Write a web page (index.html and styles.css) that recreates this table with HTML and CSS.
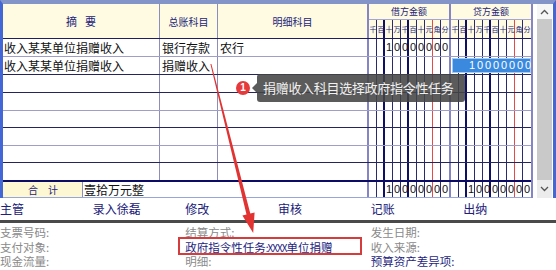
FILE: index.html
```html
<!DOCTYPE html>
<html lang="zh-CN">
<head>
<meta charset="utf-8">
<title>记账凭证</title>
<link rel="stylesheet" href="styles.css">
</head>
<body>
<div class="page">
  <div class="voucher">
    <div class="grid">
      <div class="row head">
        <div class="c c1 hd"><span>摘</span><span class="gap">要</span></div>
        <div class="c c2 hd">总账科目</div>
        <div class="c c3 hd">明细科目</div>
        <div class="amt ahead">
          <div class="atitle">借方金额</div>
          <div class="digits lbl lines"><span>千</span><span>百</span><span>十</span><span>万</span><span>千</span><span>百</span><span>十</span><span>元</span><span>角</span><span>分</span></div>
        </div>
        <div class="amt ahead">
          <div class="atitle">贷方金额</div>
          <div class="digits lbl lines"><span>千</span><span>百</span><span>十</span><span>万</span><span>千</span><span>百</span><span>十</span><span>元</span><span>角</span><span>分</span></div>
        </div>
      </div>
      <div class="row r18 lt">
        <div class="c c1">收入某某单位捐赠收入</div>
        <div class="c c2">银行存款</div>
        <div class="c c3">农行</div>
        <div class="amt lines"><div class="digits num"><span>1</span><span>0</span><span>0</span><span>0</span><span>0</span><span>0</span><span>0</span><span>0</span></div></div>
        <div class="amt lines"></div>
      </div>
      <div class="row r18 dk">
        <div class="c c1">收入某某单位捐赠收入</div>
        <div class="c c2">捐赠收入</div>
        <div class="c c3"></div>
        <div class="amt lines"></div>
        <div class="amt lines"><div class="digits num sel"><span>1</span><span>0</span><span>0</span><span>0</span><span>0</span><span>0</span><span>0</span><span>0</span></div></div>
      </div>
      <div class="row r18 dk"><div class="c c1"></div><div class="c c2"></div><div class="c c3"></div><div class="amt lines"></div><div class="amt lines"></div></div>
      <div class="row r18 lt"><div class="c c1"></div><div class="c c2"></div><div class="c c3"></div><div class="amt lines"></div><div class="amt lines"></div></div>
      <div class="row r17 dk"><div class="c c1"></div><div class="c c2"></div><div class="c c3"></div><div class="amt lines"></div><div class="amt lines"></div></div>
      <div class="row r18 lt"><div class="c c1"></div><div class="c c2"></div><div class="c c3"></div><div class="amt lines"></div><div class="amt lines"></div></div>
      <div class="row r17 dk"><div class="c c1"></div><div class="c c2"></div><div class="c c3"></div><div class="amt lines"></div><div class="amt lines"></div></div>
      <div class="row r17 last"><div class="c c1"></div><div class="c c2"></div><div class="c c3"></div><div class="amt lines"></div><div class="amt lines"></div></div>
      <div class="row total">
        <div class="c tlabel"><span>合</span><span class="gap2">计</span></div>
        <div class="c tsum">壹拾万元整</div>
        <div class="amt lines"><div class="digits num"><span>1</span><span>0</span><span>0</span><span>0</span><span>0</span><span>0</span><span>0</span><span>0</span></div></div>
        <div class="amt lines"><div class="digits num"><span>1</span><span>0</span><span>0</span><span>0</span><span>0</span><span>0</span><span>0</span><span>0</span></div></div>
      </div>
    </div>
    <div class="scroll">
      <div class="sb-up"><svg width="9" height="6" viewBox="0 0 9 6"><polyline points="1,5 4.5,1.5 8,5" fill="none" stroke="#555" stroke-width="1.3"/></svg></div>
      <div class="sb-track"></div>
      <div class="sb-down"><svg width="9" height="6" viewBox="0 0 9 6"><polyline points="1,1 4.5,4.5 8,1" fill="none" stroke="#555" stroke-width="1.3"/></svg></div>
    </div>
  </div>

  <div class="signs">
    <div>主管</div><div>录入徐磊</div><div>修改</div><div>审核</div><div>记账</div><div>出纳</div>
  </div>
  <div class="bar"></div>
  <div class="info">
    <div class="col">
      <div>支票号码:</div>
      <div>支付对象:</div>
      <div>现金流量:</div>
    </div>
    <div class="col">
      <div>结算方式:</div>
      <div class="navy">政府指令性任务<span class="xx">:XXXX</span>单位捐赠</div>
      <div>明细:</div>
    </div>
    <div class="col">
      <div>发生日期:</div>
      <div>收入来源:</div>
      <div class="navy">预算资产差异项:</div>
    </div>
    <div class="redbox"></div>
  </div>

  <svg class="arrow" width="556" height="270" viewBox="0 0 556 270">
    <polygon points="210.4,64 211.4,64 250.3,213.5 254.6,212.4 253.2,233 242.4,215.6 246.5,214.5" fill="#e23333"/>
  </svg>
  <div class="badge">1</div>
  <div class="tip">捐赠收入科目选择政府指令性任务</div>
</div>
</body>
</html>
```

FILE: styles.css
```css
* { box-sizing: border-box; }
html, body { margin: 0; padding: 0; background: #fff; }
body {
  font-family: "Noto Sans CJK SC", "Liberation Sans", sans-serif;
  font-size: 12px;
  color: #111;
}
.page {
  position: relative;
  width: 556px;
  height: 270px;
  overflow: hidden;
}

/* ---- voucher box ---- */
.voucher {
  display: flex;
  width: 556px;
  border-top: 4px solid #8394c8;
  border-left: 3px solid #4467d6;
  border-right: 3px solid #4467d6;
}
.grid { width: 528px; }

.row {
  display: grid;
  grid-template-columns: 157px 58px 149px 82px 82px;
  border-bottom: 1px solid #9e9ecb;
}
.row.dk { border-bottom-color: #25255e; }
.row.lt { border-bottom-color: #9e9ecb; }
.row.r18 { height: 18px; }
.row.r17 { height: 17px; }
.row.last { border-bottom: none; }

.c {
  white-space: nowrap;
  overflow: hidden;
  line-height: 17px;
  padding-left: 1px;
}
.c1 { border-right: 1px solid #8d8dbc; }
.c2 { border-right: 1px solid #8d8dbc; padding-left: 2px; }
.c3 { padding-left: 2px; }

.amt { border-left: 2px solid #8585c6; }

/* header */
.head {
  height: 35px;
  background: #fefbe2;
  border-bottom: 1px solid #1f1f60;
}
.hd {
  display: flex;
  align-items: center;
  justify-content: center;
  color: #23237a;
  font-size: 10px;
  padding-left: 0;
}
.c1.hd { font-size: 11px; }
.gap { margin-left: 8px; }
.ahead { display: flex; flex-direction: column; }
.atitle {
  height: 16px;
  border-bottom: 1px solid #a6a6d2;
  text-align: center;
  font-size: 9px;
  line-height: 15px;
  color: #23237a;
}

/* digit columns */
.lines {
  background-image:
    linear-gradient(to right, transparent 63px, #e34b4b 63px, #e34b4b 64px, transparent 64px),
    linear-gradient(to right, transparent 14px, #0f0f66 14px, #0f0f66 16px, transparent 16px, transparent 38px, #0f0f66 38px, #0f0f66 40px, transparent 40px),
    repeating-linear-gradient(to right, transparent 0, transparent 7px, #2a2a70 7px, #2a2a70 8px);
  background-size: 79px 100%;
  background-repeat: no-repeat;
}
.digits {
  display: grid;
  grid-template-columns: repeat(10, 8px);
  text-align: center;
}
.digits.lbl {
  height: 18px;
  font-size: 7px;
  line-height: 18px;
  color: #23237a;
}
.digits.num {
  font-family: "Liberation Sans", sans-serif;
  font-size: 11px;
  line-height: 17px;
  color: #111;
}
.digits.num span:first-child { grid-column-start: 3; }
.digits.sel {
  margin: 1px 0 0 1px;
  width: 79px;
  height: 15px;
  line-height: 13px;
  background: #3a89df;
  border: 1px solid #a3cdf4;
  color: #fff;
  grid-template-columns: 7px repeat(9, 8px);
}

/* total row */
.total {
  grid-template-columns: 80px 284px 82px 82px;
  border-top: 2px solid #0c0c66;
  border-bottom: 1px solid #96a6d8;
  height: 18px;
}
.total .c, .total .digits.num { line-height: 15px; }
.tlabel {
  background: #fdf7d4;
  border-right: 1px solid #8d8dbc;
  text-align: center;
  color: #23237a;
  font-size: 10px;
}
.gap2 { margin-left: 10px; }
.tsum { padding-left: 1px; }

/* scrollbar */
.scroll {
  width: 22px;
  border-left: 2px solid #8585c6;
  padding: 0 1px 0 4px;
  display: flex;
  flex-direction: column;
}
.sb-up {
  height: 15px;
  background: #f6f6f6;
  display: flex;
  align-items: center;
  justify-content: center;
}
.sb-track { flex: 1; background: #c9c9c9; }
.sb-down {
  height: 18px;
  background: #ececec;
  display: flex;
  align-items: center;
  justify-content: center;
}

/* sign row */
.signs {
  display: grid;
  grid-template-columns: repeat(6, 1fr);
  height: 22px;
  line-height: 22px;
  color: #20207a;
}
.bar { height: 3px; background: #4a4a4a; }

/* info block */
.info {
  position: relative;
  display: grid;
  grid-template-columns: repeat(3, 1fr);
  padding-top: 2px;
  font-size: 11.5px;
  line-height: 14.5px;
  color: #8a8a8a;
}
.col div { white-space: nowrap; height: 14.5px; }
.navy { color: #1e1e80; }
.xx { font-size: 10px; letter-spacing: -1px; }
.redbox {
  position: absolute;
  left: 178px;
  top: 14px;
  width: 184px;
  height: 18px;
  border: 2px solid #d63c3c;
}

/* annotations */
.arrow {
  position: absolute;
  left: 0;
  top: 0;
  pointer-events: none;
}
.badge {
  position: absolute;
  left: 236px;
  top: 81px;
  width: 14px;
  height: 14px;
  border-radius: 50%;
  background: #e5393b;
  color: #fff;
  font-family: "Liberation Sans", sans-serif;
  font-size: 10px;
  font-weight: bold;
  line-height: 14px;
  text-align: center;
}
.tip {
  position: absolute;
  left: 257px;
  top: 74px;
  width: 208px;
  height: 28px;
  padding-left: 6px;
  background: rgba(68, 68, 68, 0.88);
  border-radius: 3px;
  color: #f1f1f1;
  font-size: 13px;
  letter-spacing: -0.3px;
  line-height: 28px;
  white-space: nowrap;
}
.tip::before {
  content: "";
  position: absolute;
  left: -5px;
  top: 9px;
  border-top: 5px solid transparent;
  border-bottom: 5px solid transparent;
  border-right: 5px solid rgba(68, 68, 68, 0.88);
}
```
